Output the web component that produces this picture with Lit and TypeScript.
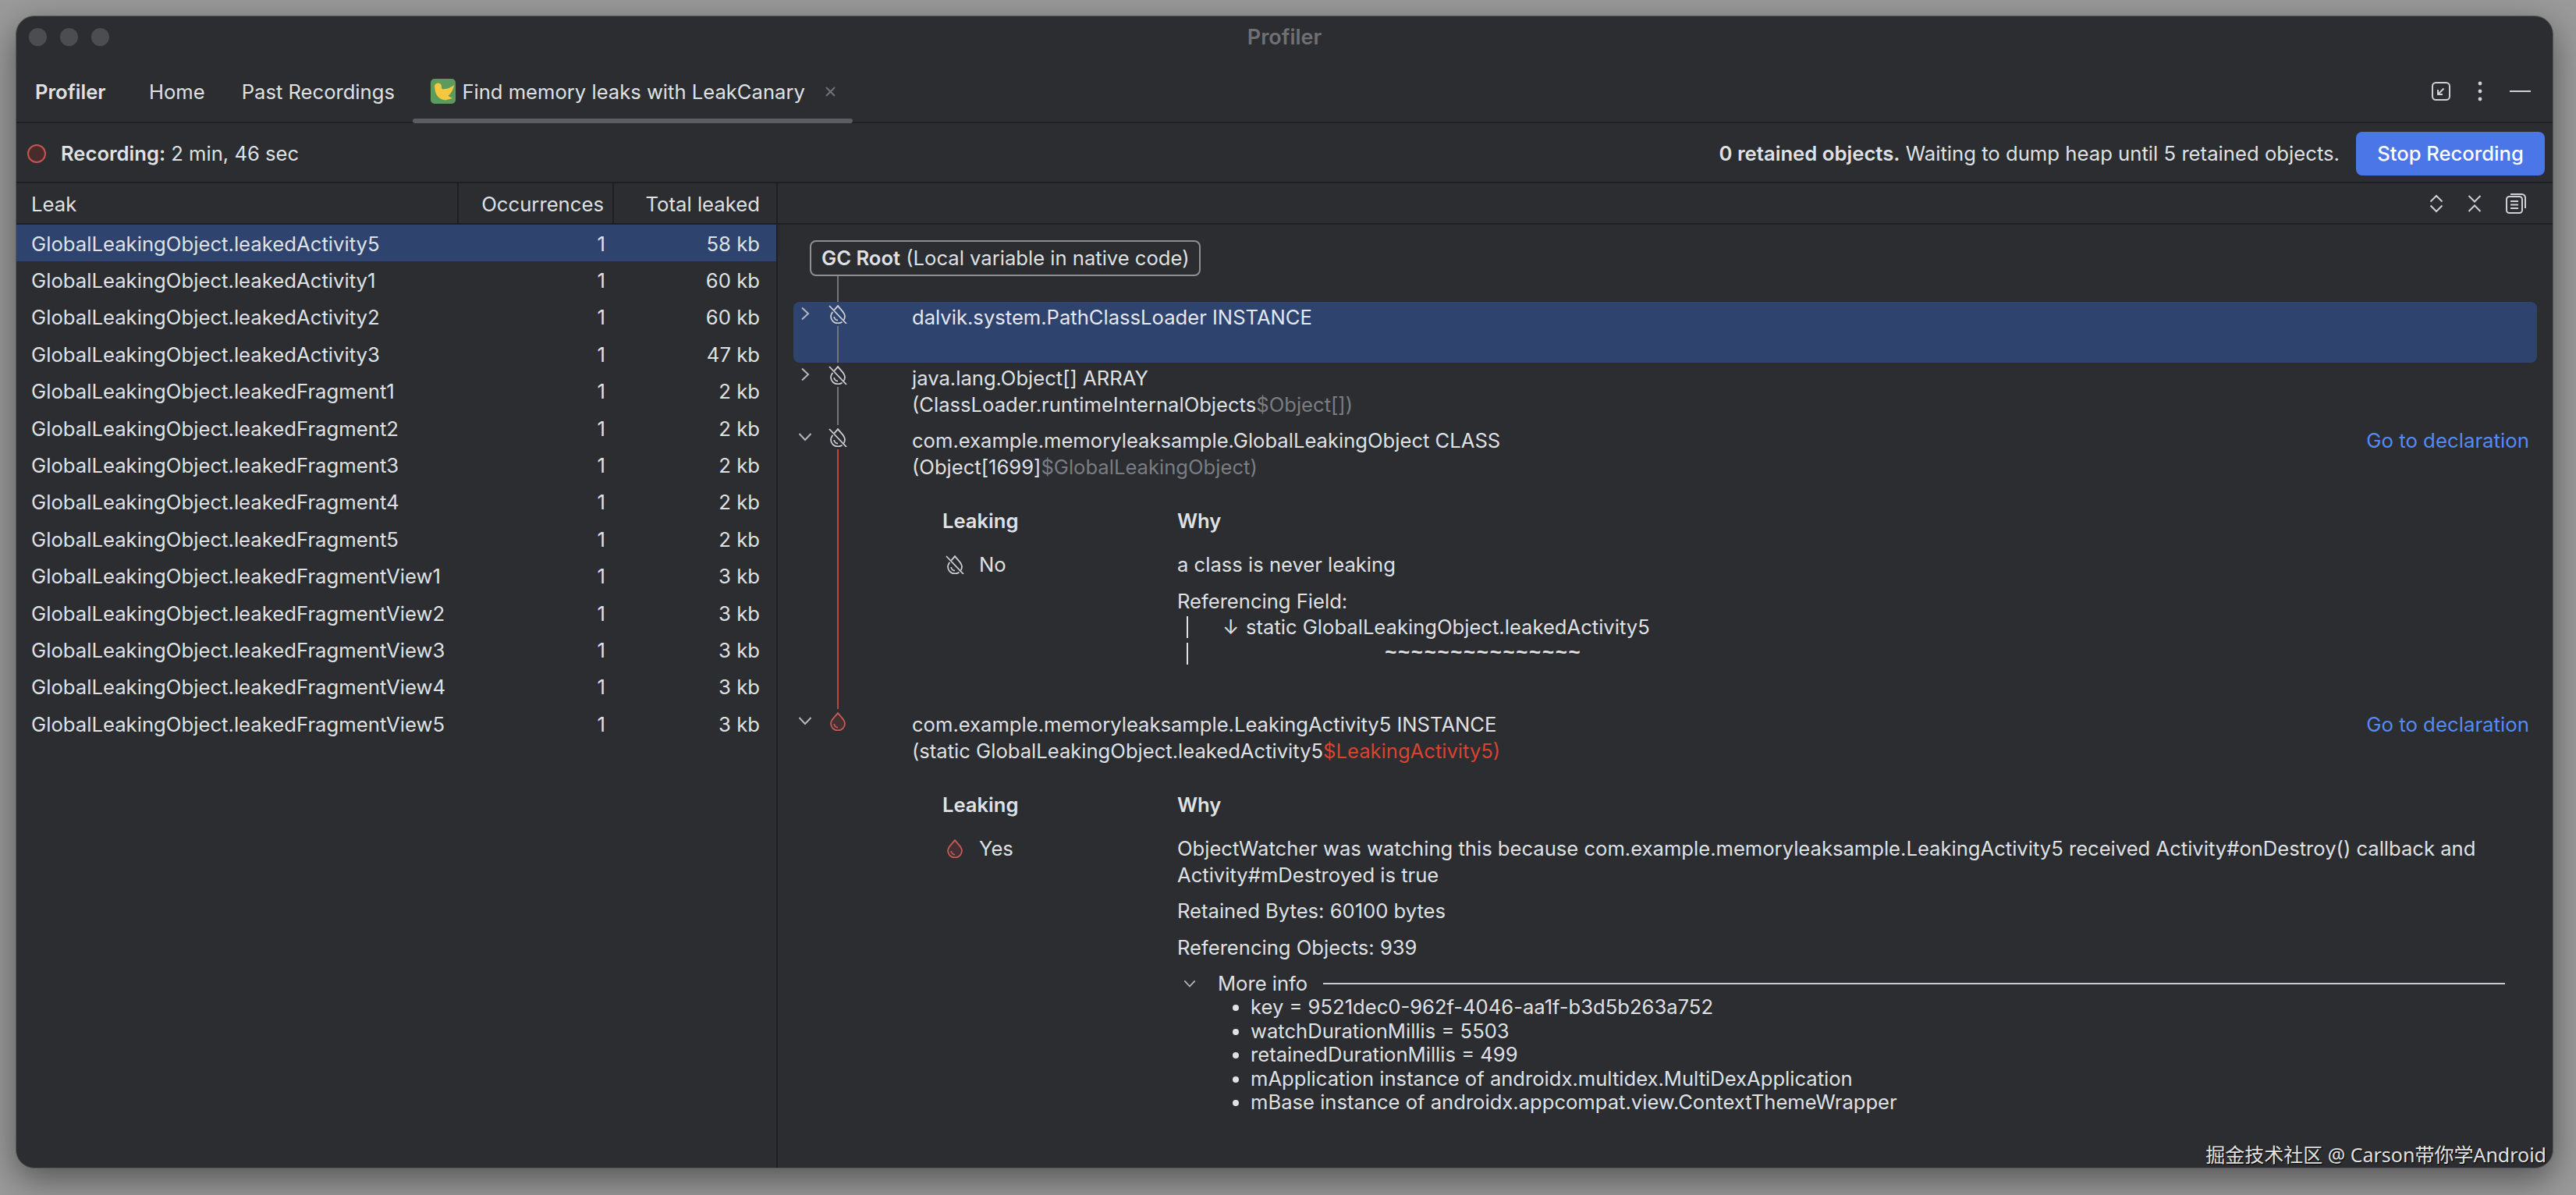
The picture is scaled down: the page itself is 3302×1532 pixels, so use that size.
import { LitElement, css, html, svg } from 'lit'
import { customElement } from 'lit/decorators.js'

const leaks = [
  ['leakedActivity5', '58 kb'],
  ['leakedActivity1', '60 kb'],
  ['leakedActivity2', '60 kb'],
  ['leakedActivity3', '47 kb'],
  ['leakedFragment1', '2 kb'],
  ['leakedFragment2', '2 kb'],
  ['leakedFragment3', '2 kb'],
  ['leakedFragment4', '2 kb'],
  ['leakedFragment5', '2 kb'],
  ['leakedFragmentView1', '3 kb'],
  ['leakedFragmentView2', '3 kb'],
  ['leakedFragmentView3', '3 kb'],
  ['leakedFragmentView4', '3 kb'],
  ['leakedFragmentView5', '3 kb'],
]

const moreInfo = [
  'key = 9521dec0-962f-4046-aa1f-b3d5b263a752',
  'watchDurationMillis = 5503',
  'retainedDurationMillis = 499',
  'mApplication instance of androidx.multidex.MultiDexApplication',
  'mBase instance of androidx.appcompat.view.ContextThemeWrapper',
]

const chevron = (open: boolean) => html`
  <svg class="chev ${open ? 'open' : ''}" viewBox="0 0 18 18">
    <path d=${open ? 'M1.5 5l7.5 8 7.5-8' : 'M5 1.5l8 7.5-8 7.5'}></path>
  </svg>
`

const drop = (leaking: boolean) => html`
  <svg class="drop ${leaking ? 'leak' : ''}" viewBox="0 0 24 24">
    <path class="body" d="M12 1C9 5.5 3 9.5 3 14.5a9 9 0 0 0 18 0C21 9.5 15 5.5 12 1Z"></path>
    <path class="inner" d="M7.2 15a5 5 0 0 0 4.8 4.6"></path>
    ${leaking
      ? null
      : svg`<path class="gap" d="M1 2l21 22"></path><path class="slash" d="M1 1l22 23"></path>`}
  </svg>
`

@customElement('app-root')
export class AppRoot extends LitElement {
  static styles = css`
    :host {
      display: block;
      box-sizing: border-box;
      width: 3302px;
      height: 1532px;
      padding: 20px 29px 34px 20px;
      background: #9a9a9a;
      font-family: Inter, 'Noto Sans CJK SC', sans-serif;
      font-size: 25.6px;
      color: #dfe1e5;
    }
    .window {
      position: relative;
      box-sizing: border-box;
      height: 100%;
      display: flex;
      flex-direction: column;
      overflow: hidden;
      background: #2b2d30;
      border: 1px solid #58595c;
      border-radius: 24px;
      box-shadow: 0 14px 44px rgba(0, 0, 0, 0.45);
    }
    .titlebar {
      flex: none;
      height: 52px;
      display: flex;
      align-items: center;
      justify-content: center;
      position: relative;
      color: #6f7074;
      font-weight: 600;
      font-size: 27px;
    }
    .lights {
      position: absolute;
      left: 16px;
      top: 15px;
      display: flex;
      gap: 17px;
    }
    .lights i {
      width: 23px;
      height: 23px;
      border-radius: 50%;
      background: #4b4d51;
    }
    .tabs {
      flex: none;
      height: 85px;
      box-sizing: border-box;
      padding: 5px 28px 0 24px;
      display: flex;
      align-items: center;
      border-bottom: 2px solid #1e1f22;
    }
    .tabs .name {
      font-weight: 600;
      margin-right: 32px;
    }
    .tab {
      position: relative;
      align-self: stretch;
      display: flex;
      align-items: center;
      padding: 0 23.5px;
      white-space: nowrap;
    }
    .tab.active {
      padding: 0 21px 0 23px;
    }
    .tab.active::after {
      content: '';
      position: absolute;
      left: 0;
      right: 0;
      bottom: -2px;
      height: 6px;
      border-radius: 3px;
      background: #5b5d62;
    }
    .app-icon {
      width: 32px;
      height: 32px;
      margin-right: 8px;
    }
    .close {
      width: 15px;
      height: 15px;
      margin-left: 25px;
      stroke: #6f7277;
      stroke-width: 2;
      fill: none;
    }
    .actions {
      margin-left: auto;
      display: flex;
      align-items: center;
      gap: 33px;
    }
    .actions svg,
    .tools svg {
      display: block;
      fill: none;
      stroke: #ced0d6;
      stroke-width: 2;
    }
    .recording {
      flex: none;
      height: 77px;
      box-sizing: border-box;
      padding: 2px 10px 0 14px;
      display: flex;
      align-items: center;
      border-bottom: 2px solid #1e1f22;
    }
    .dot {
      width: 24px;
      height: 24px;
      box-sizing: border-box;
      border-radius: 50%;
      border: 2px solid #c75450;
      background: #4a2b2b;
      margin-right: 19px;
    }
    b {
      font-weight: 600;
    }
    .status {
      margin-left: auto;
      margin-right: 21px;
      font-size: 25.7px;
    }
    .stop {
      width: 242px;
      height: 56px;
      display: flex;
      align-items: center;
      justify-content: center;
      border-radius: 8px;
      background: #4a76e8;
      color: #fff;
      font-weight: 500;
    }
    .main {
      flex: 1;
      min-height: 0;
      display: flex;
    }
    .left {
      flex: none;
      width: 976px;
      box-sizing: border-box;
      border-right: 2px solid #1e1f22;
      font-size: 25.7px;
    }
    .row {
      display: grid;
      grid-template-columns: 567px 199px 208px;
      align-items: center;
      box-sizing: border-box;
      padding-top: 1px;
      height: 47.4px;
    }
    .row.head {
      height: 53px;
      padding-top: 0;
      border-bottom: 2px solid #1e1f22;
      align-items: stretch;
    }
    .row.head span {
      display: flex;
      align-items: center;
      padding-top: 2px;
    }
    .row.head span:not(:last-child) {
      border-right: 2px solid #1e1f22;
    }
    .row.head .num {
      justify-content: flex-end;
    }
    .row.selected {
      background: #2e436e;
    }
    .row span:first-child {
      padding-left: 19px;
    }
    .num {
      text-align: right;
      padding-right: 11px;
    }
    .row span:last-child {
      padding-right: 21px;
    }
    .right {
      flex: 1;
      min-width: 0;
      display: flex;
      flex-direction: column;
    }
    .tools {
      flex: none;
      height: 53px;
      box-sizing: border-box;
      border-bottom: 2px solid #1e1f22;
      padding-right: 34px;
      display: flex;
      align-items: center;
      justify-content: flex-end;
      gap: 31px;
    }
    .tree {
      padding: 20px 20px 0 20px;
    }
    .gc {
      display: inline-block;
      box-sizing: border-box;
      height: 46px;
      margin-left: 21px;
      padding: 0 13px;
      line-height: 42px;
      border: 2px solid #8e8f92;
      border-radius: 8px;
      vertical-align: top;
    }
    .stem {
      width: 2px;
      height: 33px;
      margin-left: 56px;
      background: #74767a;
    }
    .node {
      --bg: #2b2d30;
      display: grid;
      grid-template-columns: 30px 54px 68px 1fr;
      padding-right: 10px;
    }
    .node.selected {
      --bg: #2e436e;
      background: #2e436e;
      border-radius: 8px;
      height: 78px;
      color: #e4e8f0;
    }
    .chev-cell {
      padding-top: 6px;
      display: flex;
      justify-content: center;
    }
    .chev {
      width: 18px;
      height: 18px;
      fill: none;
      stroke: #b4b8bf;
      stroke-width: 2;
    }
    .gutter {
      padding-top: 4px;
      display: flex;
      flex-direction: column;
      align-items: center;
    }
    .gutter i {
      flex: 1;
      width: 2px;
      margin-top: 3px;
      background: #74767a;
    }
    .gutter i.red {
      background: #b8473c;
    }
    .drop {
      flex: none;
      width: 24px;
      height: 24px;
      display: block;
      fill: none;
      stroke: #ced0d6;
      stroke-width: 1.8;
    }
    .drop.leak {
      stroke: #c75c54;
    }
    .drop.leak .body {
      fill: #443033;
    }
    .drop .gap {
      stroke: var(--bg, #2b2d30);
      stroke-width: 3.2;
    }
    .body-cell {
      padding-top: 1px;
      grid-column: 4;
      min-width: 0;
      line-height: 34px;
    }
    .body-cell.tail {
      padding-bottom: 9px;
    }
    .body-cell.open {
      padding-bottom: 53px;
    }
    .title {
      display: flex;
      justify-content: space-between;
      padding-top: 2px;
    }
    .muted {
      color: #7a7d83;
    }
    .red {
      color: #d9432f;
    }
    .link {
      color: #548af7;
      font-size: 25.8px;
    }
    .detail {
      margin-top: 35px;
      padding-left: 39px;
      display: grid;
      grid-template-columns: 301px 1fr;
      row-gap: 22px;
    }
    .leak-cell {
      display: flex;
      align-items: center;
      gap: 19px;
      padding-left: 4px;
      height: 34px;
    }
    .why p {
      margin: 0 31px 12.5px 0;
    }
    .why p:last-child {
      margin-bottom: 0;
    }
    .ref-line {
      display: flex;
      align-items: center;
      height: 32px;
    }
    .ref-line.squiggle {
      height: 36px;
    }
    .ref-line u {
      width: 2px;
      height: 28px;
      margin-left: 12px;
      background: #dfe1e5;
    }
    .arrow {
      margin-left: 44px;
      width: 30px;
    }
    .tilde {
      margin-left: 252px;
      font-family: 'Liberation Mono', monospace;
      font-weight: 700;
      font-size: 26px;
      letter-spacing: 1.2px;
    }
    .more {
      display: flex;
      align-items: center;
      margin-right: 31px;
      height: 34px;
    }
    .more .chev {
      width: 16px;
      height: 16px;
      margin-left: 8px;
      margin-right: 28px;
    }
    .more hr {
      flex: 1;
      height: 2px;
      margin: 0 0 0 20px;
      border: 0;
      background: #c9cbd0;
    }
    ul {
      margin: -2px 0 0;
      padding: 0 0 0 94px;
      line-height: 30.5px;
    }
    .mark {
      position: absolute;
      right: 8px;
      bottom: 0;
      line-height: 34px;
      font-size: 25px;
      font-family: 'Noto Sans', 'Noto Sans CJK SC', sans-serif;
      color: #e2e2e2;
      text-shadow: 1px 1px 1px #000;
    }
  `

  render() {
    return html`
      <div class="window">
        <div class="titlebar">
          <div class="lights"><i></i><i></i><i></i></div>
          Profiler
        </div>
        <div class="tabs">
          <span class="name">Profiler</span>
          <span class="tab">Home</span>
          <span class="tab">Past Recordings</span>
          <span class="tab active">
            <svg class="app-icon" viewBox="0 0 32 32">
              <rect width="32" height="32" rx="5" fill="#5c9a5e"></rect>
              <circle cx="9.5" cy="10" r="4.6" fill="#f5c83f"></circle>
              <path d="M5.2 9.2L2.6 10l2.8 1z" fill="#d9822b"></path>
              <path
                d="M5.4 12C5.4 21 12 28 20 27.2L28 25l-5.5-3C26 19 29 14 30 8c-4 3-9 5.5-14 5.2-1.5 0-2.2-1-2.2-2.5z"
                fill="#f5c83f"
              ></path>
            </svg>
            Find memory leaks with LeakCanary
            <svg class="close" viewBox="0 0 15 15"><path d="M2 2l11 11M13 2L2 13"></path></svg>
          </span>
          <div class="actions">
            <svg width="24" height="24" viewBox="0 0 24 24">
              <rect x="1" y="1" width="22" height="22" rx="4.5"></rect>
              <path d="M15.5 8.5l-7 7M8 10v6h6"></path>
            </svg>
            <svg width="10" height="26" viewBox="0 0 10 26">
              <circle cx="5" cy="3" r="2.4" fill="#ced0d6" stroke="none"></circle>
              <circle cx="5" cy="13" r="2.4" fill="#ced0d6" stroke="none"></circle>
              <circle cx="5" cy="23" r="2.4" fill="#ced0d6" stroke="none"></circle>
            </svg>
            <svg width="27" height="4" viewBox="0 0 27 4"><path d="M0 2h27"></path></svg>
          </div>
        </div>
        <div class="recording">
          <span class="dot"></span>
          <b>Recording:</b>&nbsp;2 min, 46 sec
          <span class="status"><b>0 retained objects.</b> Waiting to dump heap until 5 retained objects.</span>
          <span class="stop">Stop Recording</span>
        </div>
        <div class="main">
          <div class="left">
            <div class="row head">
              <span>Leak</span><span class="num">Occurrences</span><span class="num">Total leaked</span>
            </div>
            ${leaks.map(
              ([name, size], i) => html`
                <div class="row ${i === 0 ? 'selected' : ''}">
                  <span>GlobalLeakingObject.${name}</span><span class="num">1</span><span class="num">${size}</span>
                </div>
              `,
            )}
          </div>
          <div class="right">
            <div class="tools">
              <svg width="18" height="24" viewBox="0 0 18 24"><path d="M1.5 9.5L9 2l7.5 7.5M1.5 14.5L9 22l7.5-7.5"></path></svg>
              <svg width="18" height="24" viewBox="0 0 18 24"><path d="M1.5 2L9 9.5 16.5 2M1.5 22L9 14.5 16.5 22"></path></svg>
              <svg width="26" height="26" viewBox="0 0 26 26">
                <rect x="1" y="4" width="20" height="21" rx="3.5"></rect>
                <path d="M6 1h14.5A4.5 4.5 0 0 1 25 5.5V19M6 10h10M6 14.5h10M6 19h10"></path>
              </svg>
            </div>
            <div class="tree">
              <span class="gc"><b>GC Root</b> (Local variable in native code)</span>
              <div class="stem"></div>

              <div class="node selected">
                <div class="chev-cell">${chevron(false)}</div>
                <div class="gutter">${drop(false)}<i></i></div>
                <div class="body-cell">
                  <div class="title"><span>dalvik.system.PathClassLoader INSTANCE</span></div>
                </div>
              </div>

              <div class="node">
                <div class="chev-cell">${chevron(false)}</div>
                <div class="gutter">${drop(false)}<i></i></div>
                <div class="body-cell tail">
                  <div class="title"><span>java.lang.Object[] ARRAY</span></div>
                  <div>(ClassLoader.runtimeInternalObjects<span class="muted">$Object[])</span></div>
                </div>
              </div>

              <div class="node">
                <div class="chev-cell">${chevron(true)}</div>
                <div class="gutter">${drop(false)}<i class="red"></i></div>
                <div class="body-cell open">
                  <div class="title">
                    <span>com.example.memoryleaksample.GlobalLeakingObject CLASS</span>
                    <span class="link">Go to declaration</span>
                  </div>
                  <div>(Object[1699]<span class="muted">$GlobalLeakingObject)</span></div>
                  <div class="detail">
                    <b>Leaking</b><b>Why</b>
                    <div class="leak-cell">${drop(false)}<span>No</span></div>
                    <div class="why">
                      <p>a class is never leaking</p>
                      <div>Referencing Field:</div>
                      <div class="ref-line"><u></u><span class="arrow">↓</span>static GlobalLeakingObject.leakedActivity5</div>
                      <div class="ref-line squiggle"><u></u><span class="tilde">~~~~~~~~~~~~~~~</span></div>
                    </div>
                  </div>
                </div>
              </div>

              <div class="node">
                <div class="chev-cell">${chevron(true)}</div>
                <div class="gutter">${drop(true)}</div>
                <div class="body-cell">
                  <div class="title">
                    <span>com.example.memoryleaksample.LeakingActivity5 INSTANCE</span>
                    <span class="link">Go to declaration</span>
                  </div>
                  <div>(static GlobalLeakingObject.leakedActivity5<span class="red">$LeakingActivity5)</span></div>
                  <div class="detail">
                    <b>Leaking</b><b>Why</b>
                    <div class="leak-cell">${drop(true)}<span>Yes</span></div>
                    <div class="why">
                      <p>ObjectWatcher was watching this because com.example.memoryleaksample.LeakingActivity5 received Activity#onDestroy() callback and Activity#mDestroyed is true</p>
                      <p>Retained Bytes: 60100 bytes</p>
                      <p>Referencing Objects: 939</p>
                      <div class="more">${chevron(true)}<span>More info</span><hr /></div>
                      <ul>
                        ${moreInfo.map((line) => html`<li>${line}</li>`)}
                      </ul>
                    </div>
                  </div>
                </div>
              </div>
            </div>
          </div>
        </div>
        <div class="mark">掘金技术社区 @ Carson带你学Android</div>
      </div>
    `
  }
}
